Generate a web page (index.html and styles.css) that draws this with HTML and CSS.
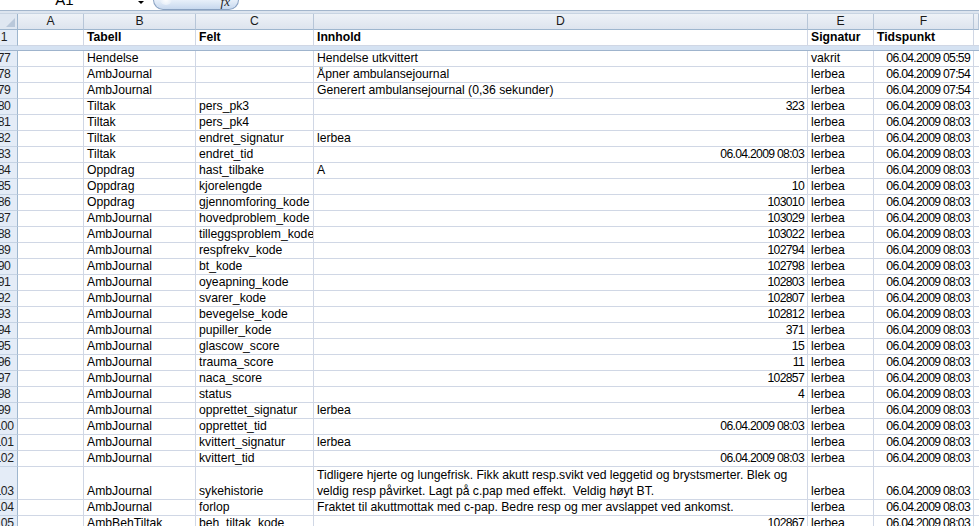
FILE: index.html
```html
<!DOCTYPE html>
<html lang="no">
<head>
<meta charset="utf-8">
<title>Excel</title>
<link rel="stylesheet" href="styles.css">
</head>
<body>
<div class="formula">
  <div class="namebox"><span>A1</span></div>
  <div class="nb-drop"><span class="arrow"></span></div>
  <div class="fxbtn"><span class="shine"></span><span class="fx">fx</span></div>
  <div class="finput"></div>
</div>
<div class="gap"></div>
<div class="sheet">
  <div class="row colhead">
    <div class="corner"><span class="tri"></span></div>
    <div class="ch">A</div><div class="ch">B</div><div class="ch">C</div><div class="ch">D</div><div class="ch">E</div><div class="ch">F</div><div class="ch"></div>
  </div>
  <div class="row hdr">
    <div class="rh"><span>1</span></div>
    <div class="c"></div><div class="c">Tabell</div><div class="c">Felt</div><div class="c">Innhold</div><div class="c">Signatur</div><div class="c">Tidspunkt</div><div class="c"></div>
  </div>
  <div class="split"></div>

  <div class="row"><div class="rh"><span>77</span></div><div class="c"></div><div class="c">Hendelse</div><div class="c"></div><div class="c">Hendelse utkvittert</div><div class="c">vakrit</div><div class="c r">06.04.2009 05:59</div><div class="c"></div></div>
  <div class="row"><div class="rh"><span>78</span></div><div class="c"></div><div class="c">AmbJournal</div><div class="c"></div><div class="c">Åpner ambulansejournal</div><div class="c">lerbea</div><div class="c r">06.04.2009 07:54</div><div class="c"></div></div>
  <div class="row"><div class="rh"><span>79</span></div><div class="c"></div><div class="c">AmbJournal</div><div class="c"></div><div class="c">Generert ambulansejournal (0,36 sekunder)</div><div class="c">lerbea</div><div class="c r">06.04.2009 07:54</div><div class="c"></div></div>
  <div class="row"><div class="rh"><span>80</span></div><div class="c"></div><div class="c">Tiltak</div><div class="c">pers_pk3</div><div class="c r">323</div><div class="c">lerbea</div><div class="c r">06.04.2009 08:03</div><div class="c"></div></div>
  <div class="row"><div class="rh"><span>81</span></div><div class="c"></div><div class="c">Tiltak</div><div class="c">pers_pk4</div><div class="c"></div><div class="c">lerbea</div><div class="c r">06.04.2009 08:03</div><div class="c"></div></div>
  <div class="row"><div class="rh"><span>82</span></div><div class="c"></div><div class="c">Tiltak</div><div class="c">endret_signatur</div><div class="c">lerbea</div><div class="c">lerbea</div><div class="c r">06.04.2009 08:03</div><div class="c"></div></div>
  <div class="row"><div class="rh"><span>83</span></div><div class="c"></div><div class="c">Tiltak</div><div class="c">endret_tid</div><div class="c r">06.04.2009 08:03</div><div class="c">lerbea</div><div class="c r">06.04.2009 08:03</div><div class="c"></div></div>
  <div class="row"><div class="rh"><span>84</span></div><div class="c"></div><div class="c">Oppdrag</div><div class="c">hast_tilbake</div><div class="c">A</div><div class="c">lerbea</div><div class="c r">06.04.2009 08:03</div><div class="c"></div></div>
  <div class="row"><div class="rh"><span>85</span></div><div class="c"></div><div class="c">Oppdrag</div><div class="c">kjorelengde</div><div class="c r">10</div><div class="c">lerbea</div><div class="c r">06.04.2009 08:03</div><div class="c"></div></div>
  <div class="row"><div class="rh"><span>86</span></div><div class="c"></div><div class="c">Oppdrag</div><div class="c">gjennomforing_kode</div><div class="c r">103010</div><div class="c">lerbea</div><div class="c r">06.04.2009 08:03</div><div class="c"></div></div>
  <div class="row"><div class="rh"><span>87</span></div><div class="c"></div><div class="c">AmbJournal</div><div class="c">hovedproblem_kode</div><div class="c r">103029</div><div class="c">lerbea</div><div class="c r">06.04.2009 08:03</div><div class="c"></div></div>
  <div class="row"><div class="rh"><span>88</span></div><div class="c"></div><div class="c">AmbJournal</div><div class="c">tilleggsproblem_kode</div><div class="c r">103022</div><div class="c">lerbea</div><div class="c r">06.04.2009 08:03</div><div class="c"></div></div>
  <div class="row"><div class="rh"><span>89</span></div><div class="c"></div><div class="c">AmbJournal</div><div class="c">respfrekv_kode</div><div class="c r">102794</div><div class="c">lerbea</div><div class="c r">06.04.2009 08:03</div><div class="c"></div></div>
  <div class="row"><div class="rh"><span>90</span></div><div class="c"></div><div class="c">AmbJournal</div><div class="c">bt_kode</div><div class="c r">102798</div><div class="c">lerbea</div><div class="c r">06.04.2009 08:03</div><div class="c"></div></div>
  <div class="row"><div class="rh"><span>91</span></div><div class="c"></div><div class="c">AmbJournal</div><div class="c">oyeapning_kode</div><div class="c r">102803</div><div class="c">lerbea</div><div class="c r">06.04.2009 08:03</div><div class="c"></div></div>
  <div class="row"><div class="rh"><span>92</span></div><div class="c"></div><div class="c">AmbJournal</div><div class="c">svarer_kode</div><div class="c r">102807</div><div class="c">lerbea</div><div class="c r">06.04.2009 08:03</div><div class="c"></div></div>
  <div class="row"><div class="rh"><span>93</span></div><div class="c"></div><div class="c">AmbJournal</div><div class="c">bevegelse_kode</div><div class="c r">102812</div><div class="c">lerbea</div><div class="c r">06.04.2009 08:03</div><div class="c"></div></div>
  <div class="row"><div class="rh"><span>94</span></div><div class="c"></div><div class="c">AmbJournal</div><div class="c">pupiller_kode</div><div class="c r">371</div><div class="c">lerbea</div><div class="c r">06.04.2009 08:03</div><div class="c"></div></div>
  <div class="row"><div class="rh"><span>95</span></div><div class="c"></div><div class="c">AmbJournal</div><div class="c">glascow_score</div><div class="c r">15</div><div class="c">lerbea</div><div class="c r">06.04.2009 08:03</div><div class="c"></div></div>
  <div class="row"><div class="rh"><span>96</span></div><div class="c"></div><div class="c">AmbJournal</div><div class="c">trauma_score</div><div class="c r">11</div><div class="c">lerbea</div><div class="c r">06.04.2009 08:03</div><div class="c"></div></div>
  <div class="row"><div class="rh"><span>97</span></div><div class="c"></div><div class="c">AmbJournal</div><div class="c">naca_score</div><div class="c r">102857</div><div class="c">lerbea</div><div class="c r">06.04.2009 08:03</div><div class="c"></div></div>
  <div class="row"><div class="rh"><span>98</span></div><div class="c"></div><div class="c">AmbJournal</div><div class="c">status</div><div class="c r">4</div><div class="c">lerbea</div><div class="c r">06.04.2009 08:03</div><div class="c"></div></div>
  <div class="row"><div class="rh"><span>99</span></div><div class="c"></div><div class="c">AmbJournal</div><div class="c">opprettet_signatur</div><div class="c">lerbea</div><div class="c">lerbea</div><div class="c r">06.04.2009 08:03</div><div class="c"></div></div>
  <div class="row"><div class="rh"><span>100</span></div><div class="c"></div><div class="c">AmbJournal</div><div class="c">opprettet_tid</div><div class="c r">06.04.2009 08:03</div><div class="c">lerbea</div><div class="c r">06.04.2009 08:03</div><div class="c"></div></div>
  <div class="row"><div class="rh"><span>101</span></div><div class="c"></div><div class="c">AmbJournal</div><div class="c">kvittert_signatur</div><div class="c">lerbea</div><div class="c">lerbea</div><div class="c r">06.04.2009 08:03</div><div class="c"></div></div>
  <div class="row"><div class="rh"><span>102</span></div><div class="c"></div><div class="c">AmbJournal</div><div class="c">kvittert_tid</div><div class="c r">06.04.2009 08:03</div><div class="c">lerbea</div><div class="c r">06.04.2009 08:03</div><div class="c"></div></div>
  <div class="row tall"><div class="rh"><span>103</span></div><div class="c"></div><div class="c">AmbJournal</div><div class="c">sykehistorie</div><div class="c wrap">Tidligere hjerte og lungefrisk. Fikk akutt resp.svikt ved leggetid og brystsmerter. Blek og<br>veldig resp påvirket. Lagt på c.pap med effekt.&nbsp; Veldig høyt BT.</div><div class="c">lerbea</div><div class="c r">06.04.2009 08:03</div><div class="c"></div></div>
  <div class="row"><div class="rh"><span>104</span></div><div class="c"></div><div class="c">AmbJournal</div><div class="c">forlop</div><div class="c">Fraktet til akuttmottak med c-pap. Bedre resp og mer avslappet ved ankomst.</div><div class="c">lerbea</div><div class="c r">06.04.2009 08:03</div><div class="c"></div></div>
  <div class="row"><div class="rh"><span>105</span></div><div class="c"></div><div class="c">AmbBehTiltak</div><div class="c">beh_tiltak_kode</div><div class="c r">102867</div><div class="c">lerbea</div><div class="c r">06.04.2009 08:03</div><div class="c"></div></div>
</div>
</body>
</html>
```

FILE: styles.css
```css
* { box-sizing: border-box; }
html, body { margin: 0; padding: 0; }
body {
  width: 979px;
  height: 526px;
  overflow: hidden;
  background: #fff;
  font-family: "Liberation Sans", Arial, sans-serif;
  font-size: 12.2px;
  color: #000;
}

/* formula bar (top cut off) */
.formula {
  display: flex;
  height: 11px;
  border-bottom: 1px solid #a3b6cc;
  overflow: hidden;
  background: #fff;
}
.namebox {
  width: 129px;
  display: flex;
  align-items: flex-end;
  justify-content: center;
  padding-bottom: 3px;
  font-size: 15px;
  line-height: 15px;
}
.nb-drop {
  width: 24px;
  display: flex;
  justify-content: center;
  padding-top: 1px;
}
.arrow {
  width: 0;
  height: 0;
  border-left: 3px solid transparent;
  border-right: 3px solid transparent;
  border-top: 3px solid #000;
}
.fxbtn {
  width: 86px;
  height: 10px;
  border: 1px solid #8aa2c2;
  border-top: none;
  border-radius: 0 0 10px 10px;
  background: linear-gradient(#e8f0fa, #c7d8ee);
  display: flex;
  align-items: flex-end;
  justify-content: space-between;
  padding: 0 8px 2px 6px;
  overflow: hidden;
}
.shine {
  width: 12px;
  height: 7px;
  margin-bottom: 2px;
  border-radius: 0 0 6px 6px;
  background: radial-gradient(circle at 50% 20%, #ffffff, #dde8f6);
}
.fx {
  font-family: "Liberation Serif", serif;
  font-style: italic;
  font-size: 13px;
  line-height: 10px;
  color: #1e1e1e;
}
.finput { flex: 1; }

.gap {
  height: 2px;
  background: #dde5ef;
}

/* sheet grid */
.row {
  display: grid;
  grid-template-columns: 18px 66px 112px 118px 494px 66px 100px 5px;
  height: 16px;
}
.row.tall { height: 33px; }

.c {
  border-right: 1px solid #d0d7e5;
  border-bottom: 1px solid #d0d7e5;
  display: flex;
  align-items: flex-end;
  padding: 0 2px 0 3px;
  line-height: 15px;
  white-space: nowrap;
  overflow: hidden;
}
.c.r {
  justify-content: flex-end;
  padding-right: 3px;
  letter-spacing: -0.7px;
}
.c.wrap {
  display: block;
  line-height: 16px;
}

.rh {
  background: #e4ecf7;
  border-right: 1px solid #9eb6ce;
  border-bottom: 1px solid #c5d3e4;
  overflow: hidden;
  display: flex;
  align-items: flex-end;
  line-height: 15px;
  color: #1f1f1f;
  letter-spacing: -0.5px;
}
.rh span {
  display: block;
  flex: none;
  width: 26px;
  margin-left: -9px;
  text-align: center;
}

/* column header */
.colhead {
  height: 17px;
  border-top: 1px solid #c8d4e2;
}
.ch, .corner {
  background: linear-gradient(#eef2f7, #dde4ee);
  border-right: 1px solid #b7c6d8;
  border-bottom: 1px solid #9eb6ce;
  display: flex;
  align-items: center;
  justify-content: center;
  line-height: 15px;
  color: #1a1a1a;
}
.corner {
  background: #dfe7f1;
  border-right: 1px solid #9eb6ce;
  align-items: flex-end;
  justify-content: flex-end;
  padding: 0 2px 2px 0;
}
.tri {
  width: 0;
  height: 0;
  border-left: 9px solid transparent;
  border-bottom: 9px solid #b9c8da;
}

.hdr .c { font-weight: bold; }

.split {
  height: 5px;
  background: #d5e2f2;
  border-bottom: 1px solid #9fb4cd;
}
```
